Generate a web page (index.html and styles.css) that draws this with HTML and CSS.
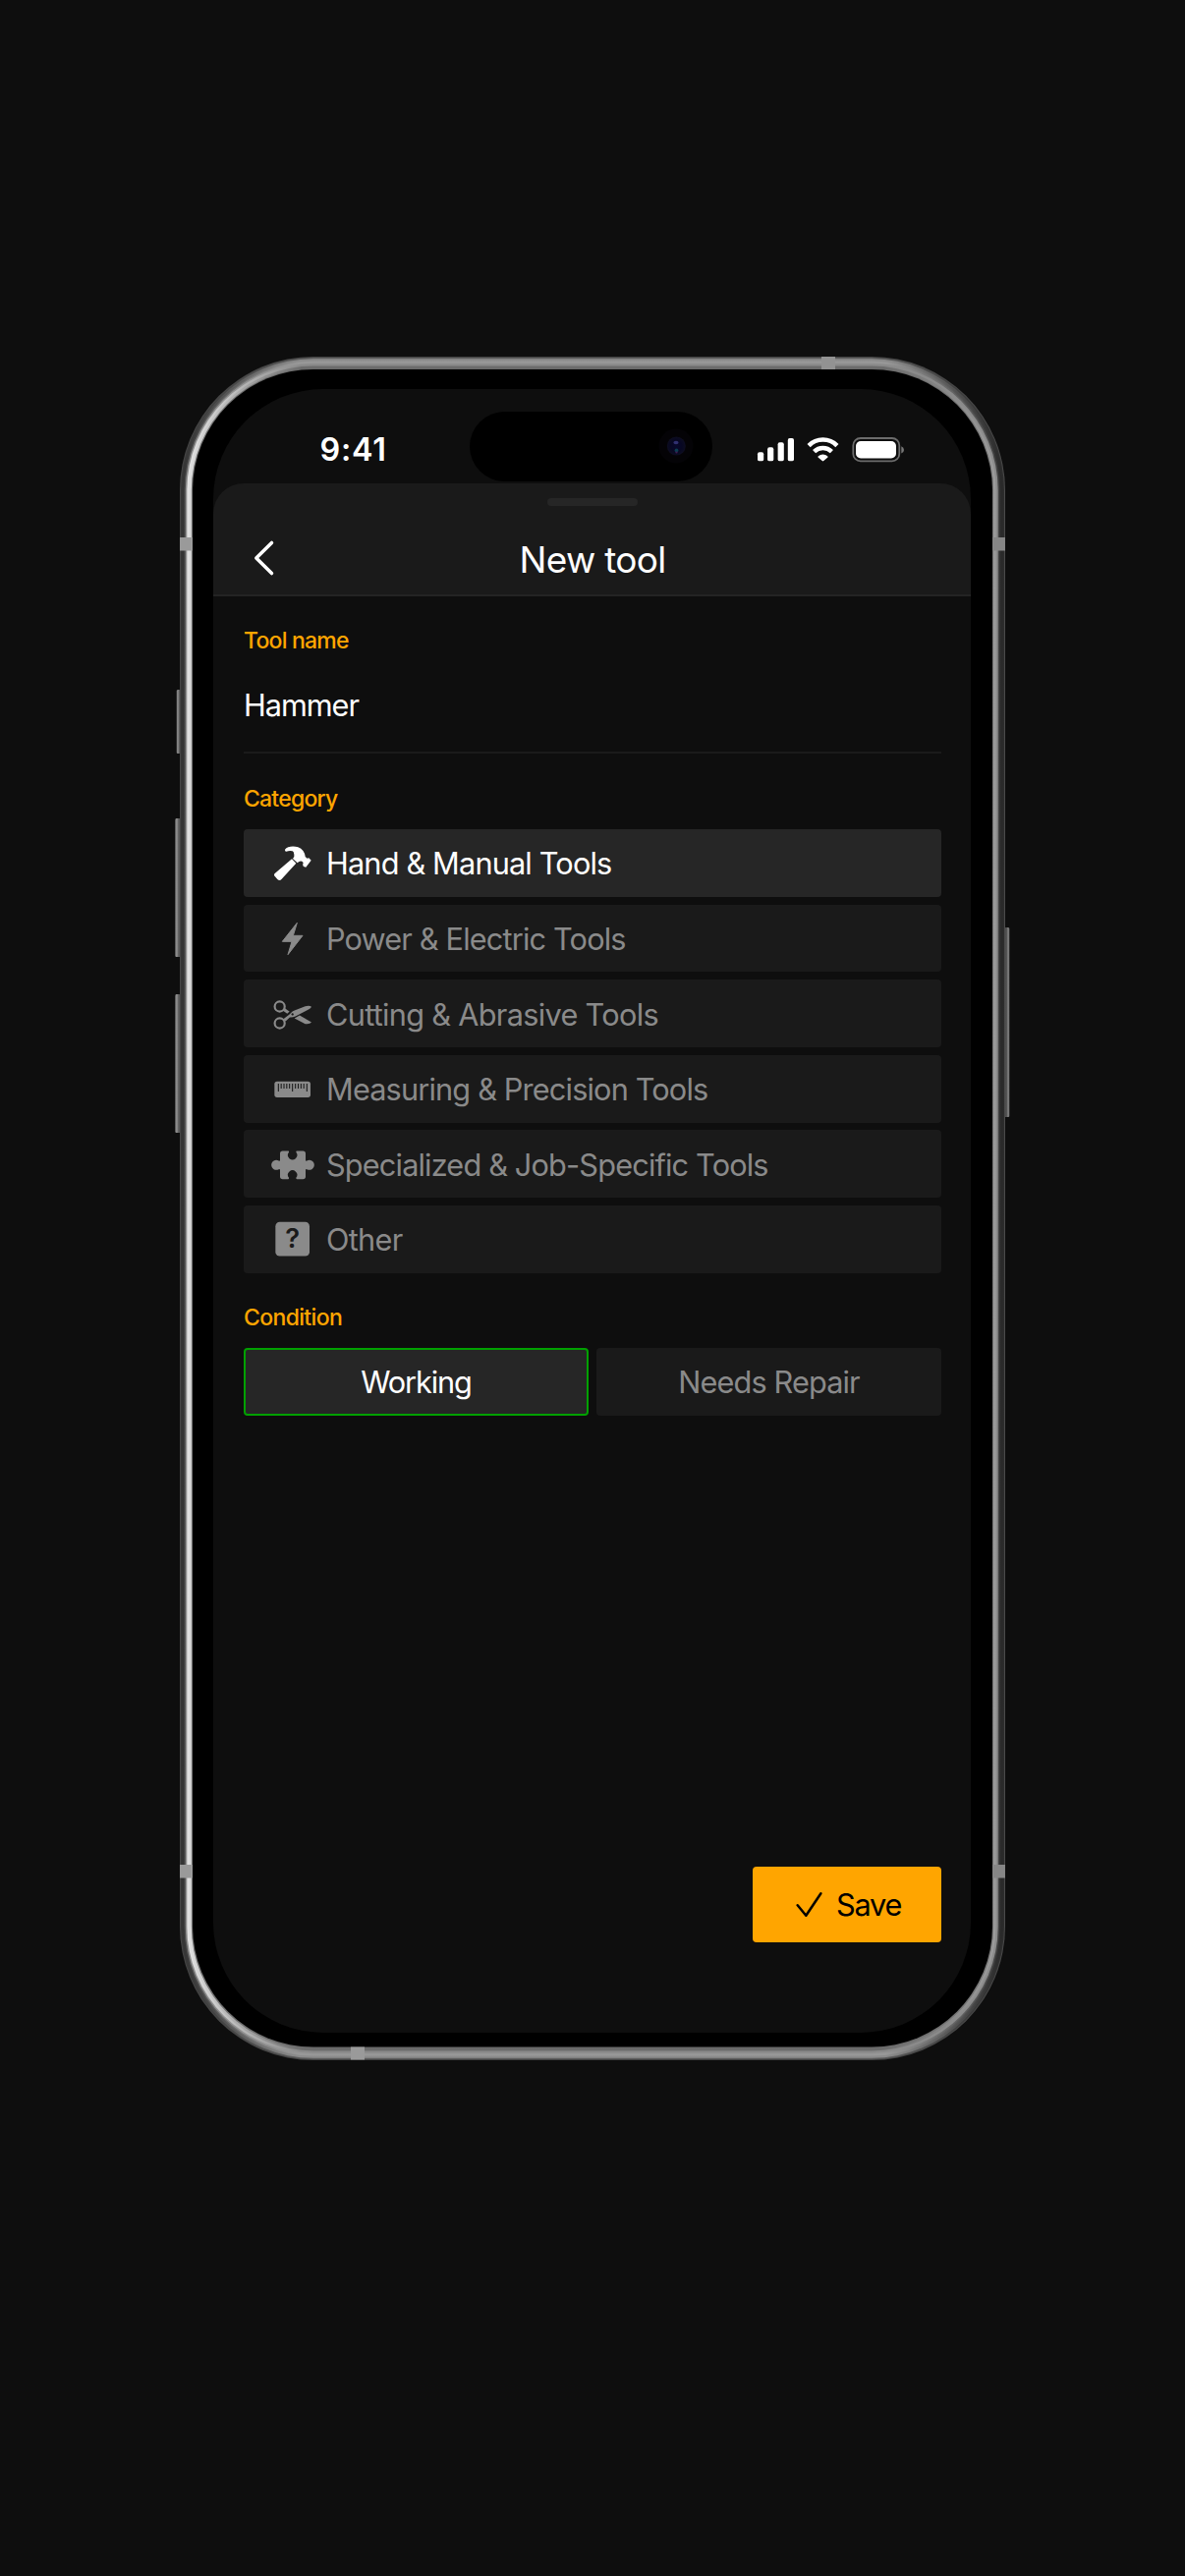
FILE: index.html
```html
<!DOCTYPE html>
<html lang="en">
<head>
<meta charset="utf-8">
<title>New tool</title>
<link rel="stylesheet" href="styles.css">
</head>
<body>
<main class="phone">
  <svg class="frame" viewBox="0 0 850 1734" aria-hidden="true">
    <defs>
      <linearGradient id="m0"><stop offset="0" stop-color="#464646"/><stop offset=".14" stop-color="#444"/><stop offset=".86" stop-color="#444"/><stop offset="1" stop-color="#4a4a4a"/></linearGradient>
      <linearGradient id="m1"><stop offset="0" stop-color="#363636"/><stop offset=".14" stop-color="#5c5c5c"/><stop offset=".86" stop-color="#5c5c5c"/><stop offset="1" stop-color="#2c2c2c"/></linearGradient>
      <linearGradient id="m2"><stop offset="0" stop-color="#333"/><stop offset=".14" stop-color="#8c8c8c"/><stop offset=".86" stop-color="#8c8c8c"/><stop offset="1" stop-color="#292929"/></linearGradient>
      <linearGradient id="m3"><stop offset="0" stop-color="#4a4a4a"/><stop offset=".14" stop-color="#999"/><stop offset=".86" stop-color="#999"/><stop offset="1" stop-color="#2e2e2e"/></linearGradient>
      <linearGradient id="m4"><stop offset="0" stop-color="#8c8c8c"/><stop offset=".14" stop-color="#969696"/><stop offset=".86" stop-color="#969696"/><stop offset="1" stop-color="#444"/></linearGradient>
      <linearGradient id="m5"><stop offset="0" stop-color="#e2e2e2"/><stop offset=".14" stop-color="#8a8a8a"/><stop offset=".86" stop-color="#8a8a8a"/><stop offset="1" stop-color="#8c8c8c"/></linearGradient>
      <linearGradient id="m6"><stop offset="0" stop-color="#dcdcdc"/><stop offset=".14" stop-color="#6c6c6c"/><stop offset=".86" stop-color="#6c6c6c"/><stop offset="1" stop-color="#9c9c9c"/></linearGradient>
      <linearGradient id="m7"><stop offset="0" stop-color="#777"/><stop offset=".14" stop-color="#6a6a6a"/><stop offset=".86" stop-color="#6a6a6a"/><stop offset="1" stop-color="#787878"/></linearGradient>
      <linearGradient id="keyL"><stop offset="0" stop-color="#444"/><stop offset=".3" stop-color="#999"/><stop offset=".6" stop-color="#606060"/><stop offset="1" stop-color="#505050"/></linearGradient>
      <linearGradient id="keyR"><stop offset="0" stop-color="#444"/><stop offset=".5" stop-color="#555"/><stop offset=".75" stop-color="#8c8c8c"/><stop offset="1" stop-color="#444"/></linearGradient>
      <radialGradient id="lens"><stop offset="0" stop-color="#08082c"/><stop offset=".6" stop-color="#070722"/><stop offset="1" stop-color="#0d0d20"/></radialGradient>
    </defs>
    <rect x="1.5" y="339" width="4.5" height="65" rx="1.5" fill="url(#keyL)"/>
    <rect x="0" y="470" width="6" height="141" rx="1.5" fill="url(#keyL)"/>
    <rect x="0" y="649" width="6" height="141" rx="1.5" fill="url(#keyL)"/>
    <rect x="844" y="581" width="5.500" height="193" rx="1.500" fill="url(#keyR)"/>
    <rect x="5" y="0" width="840" height="1734" rx="136" fill="url(#m0)"/>
    <rect x="6" y="1" width="838" height="1732" rx="135" fill="url(#m1)"/>
    <rect x="7.3" y="2.3" width="835.4" height="1729.4" rx="133.7" fill="url(#m2)"/>
    <rect x="9.5" y="4.5" width="831" height="1725" rx="131.5" fill="url(#m3)"/>
    <rect x="10.8" y="5.8" width="828.4" height="1722.4" rx="130.2" fill="url(#m4)"/>
    <rect x="12.3" y="7.3" width="825.4" height="1719.4" rx="128.7" fill="url(#m5)"/>
    <rect x="14.5" y="9.5" width="821" height="1715" rx="126.5" fill="url(#m6)"/>
    <rect x="16.8" y="11.8" width="816.4" height="1710.4" rx="124.2" fill="url(#m7)"/>
    <rect x="18" y="13" width="814" height="1707.5" rx="123" fill="#000"/>
    <g fill="#9a9a9a">
      <rect x="5" y="184" width="13" height="13.5"/>
      <rect x="5" y="1535" width="13" height="13.5"/>
      <rect x="658" y="0" width="14" height="13" fill="#929292"/>
      <rect x="179" y="1720.5" width="14" height="13"/>
      <rect x="832" y="184" width="13" height="13.5" fill="#868686"/>
      <rect x="832" y="1535" width="13" height="13.5" fill="#868686"/>
    </g>
  </svg>

  <div class="screen">
    <header class="status">
      <time class="clock">9:41</time>
      <svg class="island" viewBox="0 0 247 71" aria-hidden="true">
        <rect width="247" height="71" rx="35.5" fill="#000"/>
        <circle cx="210" cy="35" r="17.5" fill="#040306"/>
        <circle cx="210.3" cy="35" r="9.5" fill="url(#lens)"/>
        <ellipse cx="210" cy="31.5" rx="2.6" ry="1.7" fill="#303070"/>
        <circle cx="210.5" cy="39.5" r="1.9" fill="#0b3c50"/>
        <circle cx="210.5" cy="41.5" r="1.1" fill="#401a50"/>
      </svg>
      <svg class="indicators" viewBox="0 0 150 26" aria-hidden="true">
        <g fill="#fff">
          <rect x="1" y="15.3" width="6.2" height="9" rx="1.9"/>
          <rect x="11.1" y="10.3" width="6.2" height="14" rx="1.9"/>
          <rect x="21.6" y="5.3" width="6.2" height="19" rx="1.9"/>
          <rect x="31.8" y="1" width="6.2" height="23.3" rx="1.9"/>
          <path d="M72.200 19.200a7.200 7.200 0 0 0-9.400 0q-.8.8 0 1.600l3.900 3.300q.8.600 1.600 0l3.900-3.300q.8-.8 0-1.600z"/>
        </g>
        <g fill="none" stroke="#fff" stroke-width="4.500">
          <path d="M53.100 8.600a20.300 20.300 0 0 1 28.800 0"/>
          <path d="M58.600 14.600a12.700 12.700 0 0 1 17.800 0"/>
        </g>
        <rect x="98.300" y="1" width="47" height="23.400" rx="7.500" fill="none" stroke="#6c6c6c" stroke-width="1.800"/>
        <rect x="101" y="4" width="41" height="17.400" rx="5" fill="#fff"/>
        <path d="M147.300 9.200q2.700 1 2.700 3.700t-2.700 3.700z" fill="#777"/>
      </svg>
    </header>

    <section class="sheet">
      <header class="topbar">
        <span class="grabber"></span>
        <div class="nav">
          <svg class="back" viewBox="0 0 24 38" aria-label="Back"><path d="M19.500 3.400 3.800 19l15.700 15.600" fill="none" stroke="#fff" stroke-width="3.500" stroke-linecap="round" stroke-linejoin="round"/></svg>
          <h1 class="title">New tool</h1>
        </div>
      </header>

      <form class="form">
        <div class="label">Tool name</div>
        <div class="field">Hammer</div>

        <div class="label label-category">Category</div>
        <ul class="categories">
          <li class="option selected">
            <svg viewBox="105 76 135 138"><path d="M150 105C157 95 176 93 190 98c13 5 21 16 22 29l6 5q3-1 5-1l7 7-16 21q-6 0-9-4-1-6 1-10l-4-4q-7-1-10 2l-4 3-14-13q6-7 4-13-1-9-5-10-8-3-19 1-5 0-4-6zM171 134l13 13-44 48q-6 7-13 1l-7-8q-6-6 0-11z"/></svg>
            <span>Hand &amp; Manual Tools</span>
          </li>
          <li class="option">
            <svg viewBox="105 306 135 138"><path d="M187 328l-12 39h29l-45 58 12-40h-29z" stroke="currentColor" stroke-width="3" stroke-linejoin="round"/></svg>
            <span>Power &amp; Electric Tools</span>
          </li>
          <li class="option">
            <svg viewBox="105 535.500 135 138"><g fill="none" stroke="currentColor" stroke-width="6.500"><circle cx="134" cy="582" r="15.200"/><circle cx="134" cy="633" r="15.200"/></g><path fill-rule="evenodd" d="M144 621l19-14 9-9q3-3 9-5l31-12q13-4 19 2-2 5-9 8l-40 21q-9 4-17 3l-13 12zM173 602a3.500 3.500 0 1 0 .1 0zM179 618l16-9 36 21q-5 7-19 5zM150 587l9 7 5 3-7 7-13-9z"/></svg>
            <span class="loose">Cutting &amp; Abrasive Tools</span>
          </li>
          <li class="option">
            <svg viewBox="105 75 135 138"><rect x="118" y="122" width="110" height="49" rx="8"/><path d="M130 129v24M138.500 129v15M147 129v15M155.500 129v15M164 129v15M173 129v24M182 129v15M190.500 129v15M199 129v15M207.500 129v15M217 129v24" stroke="#1a1a1a" stroke-width="3.200"/></svg>
            <span>Measuring &amp; Precision Tools</span>
          </li>
          <li class="option">
            <svg viewBox="105 304.500 135 138"><path d="M143 333h17q3 0 2 4a14 14 0 1 0 22 0q-1-4 3-4h18q8 0 8 8v19q0 5 4 3a15 15 0 1 1 0 26q-4-2-4 3v19q0 8-8 8h-18q-4 0-3-4a14 14 0 1 0-22 0q1 4-2 4h-17q-8 0-8-8v-19q0-5-4-3a15 15 0 1 1 0-26q4 2 4-3v-19q0-8 8-8z"/></svg>
            <span>Specialized &amp; Job-Specific Tools</span>
          </li>
          <li class="option">
            <svg viewBox="105 534.500 135 138"><rect x="121" y="552" width="104" height="104" rx="13"/><text class="mark" x="173" y="632" text-anchor="middle">?</text></svg>
            <span class="loose">Other</span>
          </li>
        </ul>

        <div class="label label-condition">Condition</div>
        <div class="conditions">
          <button type="button" class="choice active">Working</button>
          <button type="button" class="choice">Needs Repair</button>
        </div>

        <button type="button" class="save">
          <svg viewBox="0 0 28 28" aria-hidden="true"><path d="M1.700 15.200 10.300 25.700 25.400 3.200" fill="none" stroke="#000" stroke-width="2.500" stroke-linecap="round" stroke-linejoin="round"/></svg>
          <span>Save</span>
        </button>
      </form>
    </section>
  </div>
</main>
</body>
</html>
```
FILE: styles.css
```css
* { box-sizing: border-box; }

body {
  margin: 0;
  min-height: 2622px;
  padding-top: 363px;
  background: #0e0e0e;
  color: #fff;
  font-family: Inter, "Liberation Sans", sans-serif;
}

.phone {
  position: relative;
  width: 840px;
  height: 1734px;
  margin: 0 auto;
  padding: 33px 35px 28px 34px;
}

.frame {
  position: absolute;
  left: -5px;
  top: 0;
  width: 850px;
  height: 1734px;
}

.screen {
  position: relative;
  display: flex;
  flex-direction: column;
  height: 1673px;
  border-radius: 112px;
  background: #0e0e0e;
  overflow: hidden;
}

.status {
  display: grid;
  grid-template-columns: 261px 247px 1fr;
  align-items: start;
  height: 96px;
  flex: none;
}

.clock {
  padding: 42px 0 0 108.5px;
  font-size: 32.300px;
  line-height: 40px;
  font-weight: 600;
  letter-spacing: .8px;
}

.island { width: 247px; height: 71px; margin-top: 23px; }
.indicators { width: 150px; height: 26px; margin: 49px 0 0 45px; }

.sheet {
  display: flex;
  flex-direction: column;
  flex: 1;
  border-radius: 31px 31px 0 0;
  overflow: hidden;
}

.topbar {
  display: flex;
  flex-direction: column;
  align-items: center;
  height: 115px;
  padding-top: 15px;
  background: #1a1a1a;
  border-bottom: 2px solid #242424;
}

.grabber { width: 92px; height: 8px; border-radius: 4px; background: #262626; }

.nav {
  display: grid;
  grid-template-columns: 24px 1fr 24px;
  align-items: center;
  align-self: stretch;
  margin-top: 29.300px;
  padding: 0 40px;
}

.back { width: 24px; height: 38px; }

.title {
  margin: 0;
  padding: 4px 0 0 1px;
  text-align: center;
  font-size: 37px;
  line-height: 44px;
  font-weight: 400;
  letter-spacing: -.7px;
}

.form { display: flex; flex-direction: column; padding: 31px 30px 0 31px; }

.label {
  height: 28px;
  font-size: 23px;
  line-height: 28px;
  font-weight: 500;
  letter-spacing: -.78px;
  color: #ffa500;
}

.label-category { margin-top: 32px; }
.label-condition { margin-top: 31px; letter-spacing: -.65px; }

.field {
  height: 101px;
  padding-top: 33px;
  border-bottom: 2px solid #1a1a1a;
  font-size: 30.700px;
  line-height: 38px;
  letter-spacing: -1.050px;
}

.categories { display: flex; flex-direction: column; gap: 7.700px; margin: 17px 0 0; padding: 0; list-style: none; }

.option {
  display: flex;
  align-items: center;
  gap: 12px;
  height: 68.900px;
  padding-left: 27px;
  border-radius: 4px;
  background: #1a1a1a;
  color: #8a8a8a;
  font-size: 30.700px;
  line-height: 38px;
  letter-spacing: -.84px;
}

.option span { padding-top: 2px; }
.option .loose { letter-spacing: -.7px; }
.option svg { width: 45px; height: 46px; fill: currentColor; }
.option.selected { background: #262626; color: #fff; }
.mark { font-size: 82px; font-weight: 600; letter-spacing: 0; fill: #1a1a1a; }

.conditions { display: grid; grid-template-columns: 1fr 1fr; gap: 8px; margin-top: 17px; }

.choice {
  height: 69px;
  padding: 2px 0 0;
  border: 0;
  border-radius: 4px;
  background: #1a1a1a;
  color: #8a8a8a;
  font: 400 30.700px/38px Inter, "Liberation Sans", sans-serif;
  letter-spacing: -.87px;
}

.choice.active { border: 2px solid #00a000; background: #262626; color: #fff; letter-spacing: -1.100px; }

.save {
  display: flex;
  align-items: center;
  align-self: flex-end;
  gap: 13px;
  width: 192px;
  height: 77px;
  margin-top: 459px;
  padding: 0 0 0 44px;
  border: 0;
  border-radius: 4px;
  background: #ffa500;
  color: #000;
  font: 400 30.700px/38px Inter, "Liberation Sans", sans-serif;
  letter-spacing: -1.200px;
}

.save svg { width: 28px; height: 28px; }
.save span { padding-top: 2px; }
```
